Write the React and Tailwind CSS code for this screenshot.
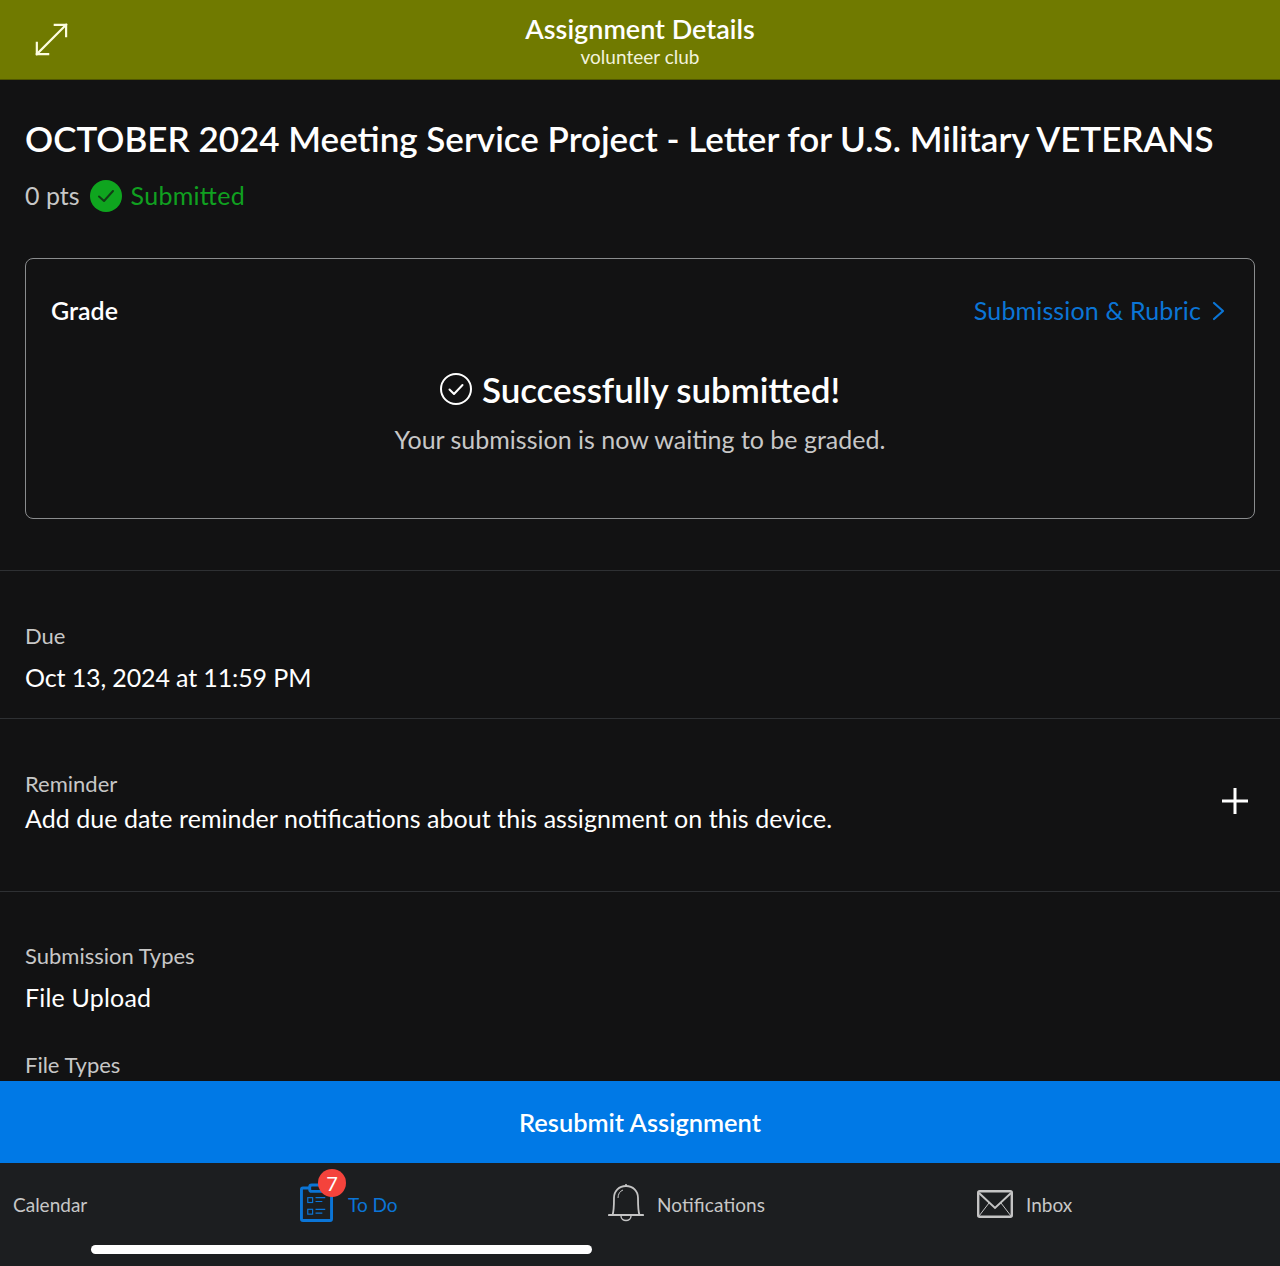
import React from "react";

const Expand = () => (
  <svg width="34" height="34" viewBox="0 0 36 36" fill="none" stroke="#fdfde0" strokeWidth="2.3" strokeLinecap="square">
    <path d="M3 34 L34 3" />
    <path d="M22 3 H34 V15" />
    <path d="M3 22 V34 H15" />
  </svg>
);

const Check = ({ className }) => (
  <svg viewBox="0 0 32 32" className={className} fill="none">
    <circle cx="16" cy="16" r="15" stroke="currentColor" strokeWidth="2" />
    <path d="M9.5 16.5 L14 21 L22.5 12" stroke="currentColor" strokeWidth="2" strokeLinecap="round" strokeLinejoin="round" />
  </svg>
);

const Clip = () => (
  <svg className="mb-[4px]" width="33" height="39" viewBox="0 0 34 40" fill="none" stroke="#0b75d6">
    <path d="M10 5 H3 Q1.5 5 1.5 6.5 V37 Q1.5 38.5 3 38.5 H31 Q32.5 38.5 32.5 37 V6.5 Q32.5 5 31 5 H24" strokeWidth="3" />
    <rect x="10" y="2" width="14" height="6.5" rx="2" strokeWidth="3" />
    <rect x="8" y="15" width="5" height="5" strokeWidth="1.2" />
    <rect x="8" y="27" width="5" height="5" strokeWidth="1.2" />
    <path d="M16 15 H26 M16 19 H23 M16 27 H26 M16 31 H23" strokeWidth="1.2" />
  </svg>
);

const Bell = () => (
  <svg className="mb-[2px]" width="36" height="40" viewBox="0 0 36 40" fill="none" stroke="#c4c4c4">
    <path d="M1 32 H35" strokeWidth="2.2" strokeLinecap="round" />
    <path d="M4.5 32 C6 28 6 24 6 15 C6 8 11 3 18 3 C25 3 30 8 30 15 C30 24 30 28 31.5 32" strokeWidth="1.8" />
    <path d="M18 1 V3" strokeWidth="1.6" />
    <path d="M10 15 C10 11 12 8 15 7" strokeWidth="1" />
    <path d="M13 33 C13 39 23 39 23 33" strokeWidth="1.4" />
  </svg>
);

const Mail = () => (
  <svg width="36" height="28" viewBox="0 0 36 28" fill="none" stroke="#c4c4c4">
    <rect x="1.2" y="1.2" width="33.6" height="25.6" rx="1.5" strokeWidth="2.4" />
    <path d="M2 3 L18 18 L34 3" strokeWidth="2" />
    <path d="M2 26 L12 13 M34 26 L24 13" strokeWidth="1" />
  </svg>
);

function Row({ className, children }) {
  return <div className={`border-b border-[#2e3033] px-[25px] ${className}`}>{children}</div>;
}

export default function App() {
  return (
    <div
      className="flex h-[1266px] w-[1280px] flex-col overflow-hidden bg-[#121213] text-white"
      style={{ fontFamily: "Lato, 'Noto Sans', sans-serif", fontFeatureSettings: '"liga" 1' }}
    >
      <header className="relative flex h-[80px] shrink-0 flex-col items-center border-b border-[#4f5600] bg-[#707a00] pt-[12px]">
        <div className="absolute left-[34px] top-[22px]"><Expand /></div>
        <div className="text-[27px] leading-[34px] font-semibold">Assignment Details</div>
        <div className="text-[19px] leading-[21px] text-[#f2f3dc]">volunteer club</div>
      </header>

      <main className="min-h-0 flex-1 overflow-hidden">
        <div className="border-b border-[#2e3033] px-[25px] pb-[51px]">
          <h1 className="pt-[36px] text-[35px] leading-[44px] font-semibold whitespace-nowrap">
            OCTOBER 2024 Meeting Service Project - Letter for U.S. Military VETERANS
          </h1>
          <div className="mt-[19px] flex h-[34px] items-center text-[25px] text-[#c7c7c7]">
            <span>0 pts</span>
            <span className="ml-[10px] flex h-[32px] w-[32px] items-center justify-center rounded-full bg-[#0fa51f]">
              <svg width="18" height="14" viewBox="0 0 18 14" fill="none" stroke="#123d16" strokeWidth="2" strokeLinecap="round" strokeLinejoin="round">
                <path d="M2 7.5 L7 12 L16 2" />
              </svg>
            </span>
            <span className="ml-[9px] tracking-[0.3px] text-[#10a020]">Submitted</span>
          </div>
          <section className="mt-[45px] h-[261px] rounded-[8px] border border-[#8a8c8e] px-[25px] pt-[34px]">
            <div className="flex h-[36px] items-center justify-between">
              <span className="text-[25px] font-semibold">Grade</span>
              <span className="flex items-center text-[25px] tracking-[0.15px] text-[#0b75d6]">
                Submission &amp; Rubric
                <svg className="ml-[11px] mr-[4px]" width="13" height="20" viewBox="0 0 13 20" fill="none" stroke="#0b75d6" strokeWidth="2.2" strokeLinecap="round" strokeLinejoin="round">
                  <path d="M2 2 L11 10 L2 18" />
                </svg>
              </span>
            </div>
            <div className="mt-[36px] flex h-[48px] items-center justify-center">
              <Check className="mr-[10px] h-[32px] w-[32px] text-white" />
              <span className="text-[35px] font-semibold tracking-[-0.1px]">Successfully submitted!</span>
            </div>
            <p className="mt-[9px] text-center text-[25px] leading-[34px] text-[#c7c7c7]">
              Your submission is now waiting to be graded.
            </p>
          </section>
        </div>

        <Row className="h-[148px] pt-[50px]">
          <div className="text-[22px] leading-[30px] text-[#c7c7c7]">Due</div>
          <div className="mt-[10px] text-[25px] leading-[32px] tracking-[-0.12px]">Oct 13, 2024 at 11:59 PM</div>
        </Row>

        <Row className="flex h-[173px] items-center justify-between pb-[8px] pr-[32px]">
          <div>
            <div className="text-[22px] leading-[30px] text-[#c7c7c7]">Reminder</div>
            <div className="mt-[3px] text-[25px] leading-[32px] tracking-[0.05px]">Add due date reminder notifications about this assignment on this device.</div>
          </div>
          <svg width="26" height="26" viewBox="0 0 26 26" stroke="white" strokeWidth="3">
            <path d="M13 0 V26 M0 13 H26" />
          </svg>
        </Row>

        <div className="px-[25px] pt-[49px]">
          <div className="text-[22px] leading-[30px] text-[#c7c7c7]">Submission Types</div>
          <div className="mt-[10px] text-[25px] leading-[32px] tracking-[0.2px]">File Upload</div>
          <div className="mt-[37px] text-[22px] leading-[30px] text-[#c7c7c7]">File Types</div>
        </div>
      </main>

      <button className="h-[82px] shrink-0 bg-[#0079e6] pt-[1px] text-[25.4px] font-semibold text-white">Resubmit Assignment</button>

      <nav className="relative h-[103px] shrink-0 bg-[#1c1e20] text-[19px]">
        <div className="flex h-[82px] items-center">
          <span className="ml-[13px] w-[287px] pt-[2px] text-[#c7c7c7]">Calendar</span>
          <div className="relative flex w-[308px] items-center">
            <Clip />
            <span className="absolute left-[18px] top-[-14px] flex h-[28px] w-[28px] items-center justify-center rounded-full bg-[#f4433c] text-[20px] text-white">7</span>
            <span className="ml-[15px] pt-[2px] text-[#0b75d6]">To Do</span>
          </div>
          <div className="flex w-[369px] items-center">
            <Bell />
            <span className="ml-[13px] pt-[2px] tracking-[0.1px] text-[#c7c7c7]">Notifications</span>
          </div>
          <div className="flex items-center">
            <Mail />
            <span className="ml-[13px] pt-[2px] text-[#c7c7c7]">Inbox</span>
          </div>
        </div>
        <div className="ml-[91px] h-[9px] w-[501px] rounded-full bg-white"></div>
      </nav>
    </div>
  );
}
